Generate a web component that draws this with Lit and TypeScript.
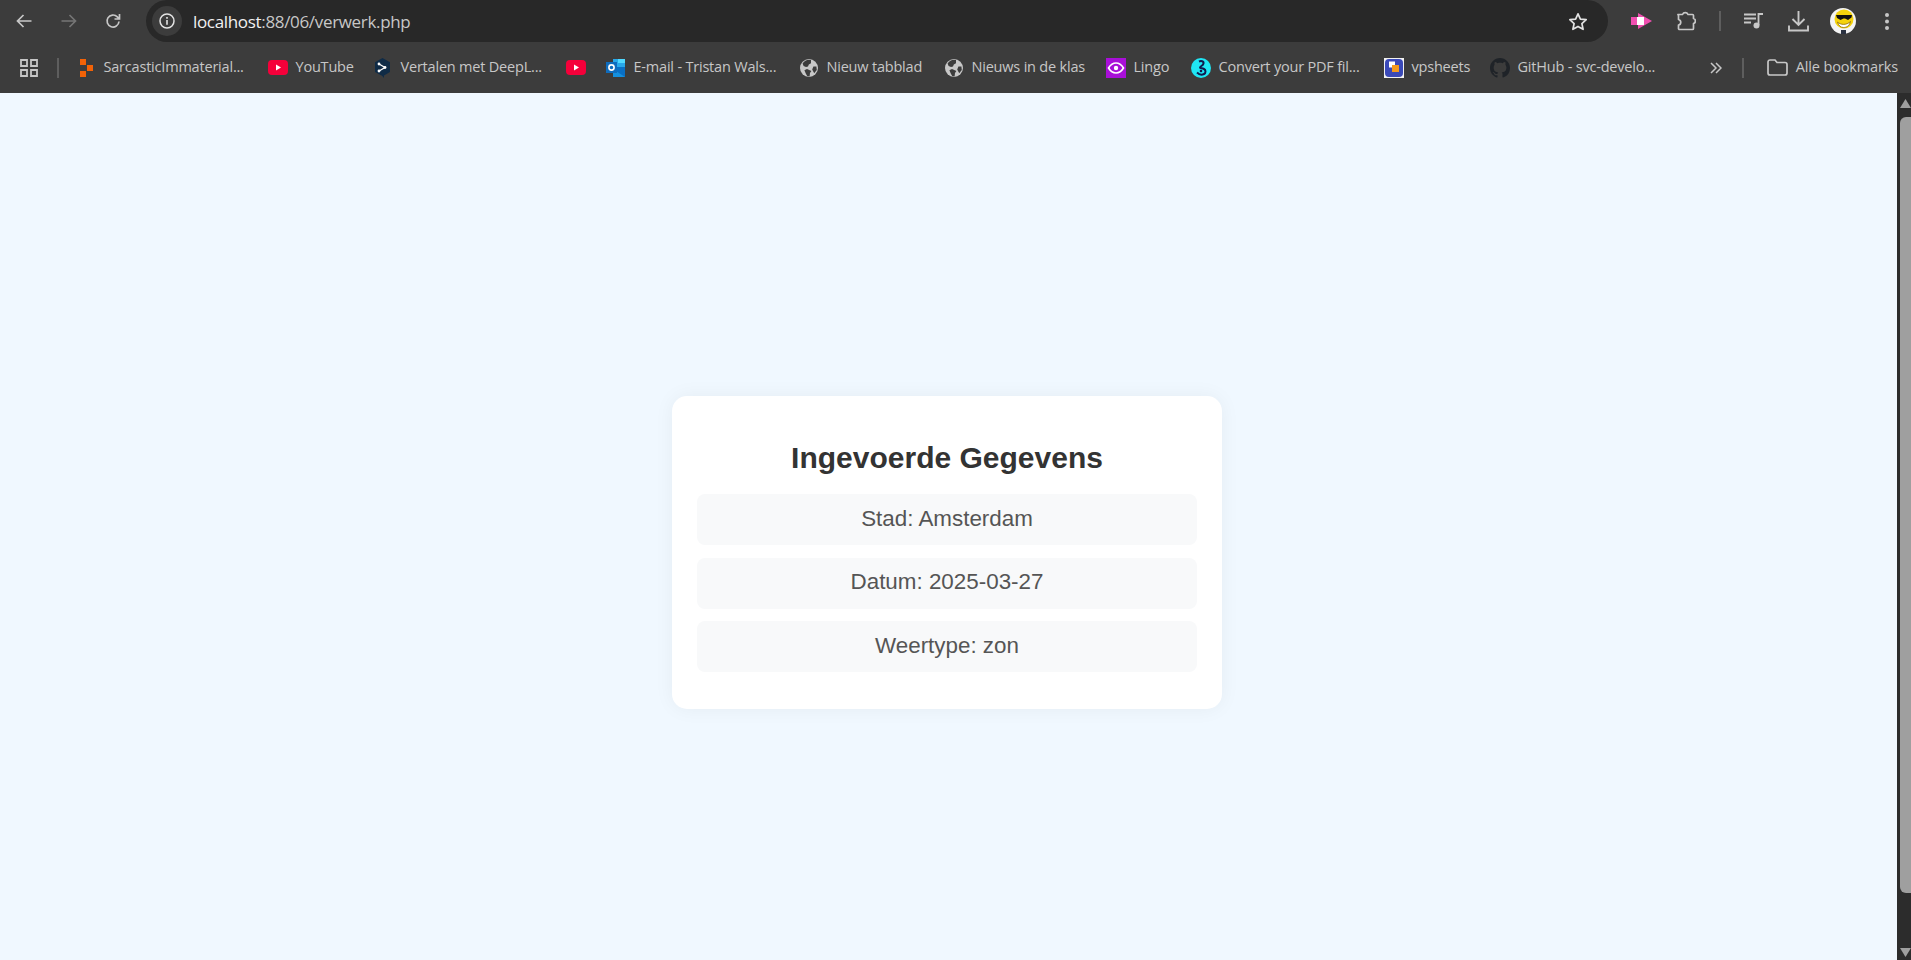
import { LitElement, html, css, TemplateResult } from 'lit';
import { customElement } from 'lit/decorators.js';

const globe = html`<svg width="18" height="18" viewBox="0 0 18 18">
  <circle cx="9" cy="9" r="9" fill="#c7c7c7" />
  <path d="M9 0.8C6.5 1 4 2.2 2.6 4.4L3.6 7 6 8l2-.4.8-2.2 2.2-1.2L11 1zM7 10l-2.6 1.2L6 15l1.4 2.3 2.2.2.4-3.6 1.4-2zM13.4 7.6l-1.2 3 2 3.6 2.6-3.2-.4-3.6z" fill="#3c3c3c" />
</svg>`;

const youtube = html`<svg width="20" height="15" viewBox="0 0 20 15">
  <rect width="20" height="15" rx="4" fill="#f5003a" />
  <path d="M8 4.5 13 7.5 8 10.5z" fill="#fff" />
</svg>`;

const marks: Record<string, TemplateResult> = {
  sarcastic: html`<svg width="14" height="18" viewBox="0 0 14 18">
    <path d="M1 0h6v6H1zM1 12h6v6H1zM8 6h6v6H8z" fill="#f26207" />
  </svg>`,
  youtube,
  deepl: html`<svg width="17" height="20" viewBox="0 0 17 20">
    <path d="M8.5 0 16 4.3v9.6L10 17.6V20l-2-2.3-7-3.8V4.3z" fill="#0f2b46" />
    <path d="M5 6 11 9.5 5 13" fill="none" stroke="#fff" stroke-width="1.3" />
    <circle cx="5" cy="6" r="1.4" fill="#fff" /><circle cx="11" cy="9.5" r="1.4" fill="#fff" /><circle cx="5" cy="13" r="1.4" fill="#fff" />
  </svg>`,
  outlook: html`<svg width="20" height="20" viewBox="0 0 20 20">
    <path d="M7 1h12v8H7z" fill="#28a8ea" /><path d="M12 1h7v4h-7z" fill="#50d9ff" />
    <path d="M7 9h12v10H7z" fill="#0a6fc4" /><path d="M7 11l12 8H7z" fill="#1490df" />
    <rect y="4" width="11" height="11" fill="#0f6cbd" />
    <circle cx="5.5" cy="9.5" r="2.6" fill="none" stroke="#fff" stroke-width="1.6" />
  </svg>`,
  globe,
  lingo: html`<svg width="20" height="20" viewBox="0 0 20 20">
    <rect width="20" height="20" fill="#a80fd8" />
    <path d="M2.5 10C5 6 7.5 5 10 5s5 1 7.5 5c-2.500 4-5 5-7.500 5s-5-1-7.500-5z" fill="none" stroke="#fff" stroke-width="1.6" />
    <circle cx="10" cy="10" r="2.200" fill="#fff" />
  </svg>`,
  convert: html`<svg width="20" height="20" viewBox="0 0 20 20">
    <circle cx="10" cy="10" r="10" fill="#1fe6f5" />
    <path d="M8 3.500C10 2.500 13 3 12.500 5.500S9 8 9 9.500c0 1 2 .5 4 1.500s2 4 0 5-5 .5-7-1.500" fill="none" stroke="#101a4f" stroke-width="2" />
    <circle cx="10" cy="13" r="1.300" fill="#101a4f" />
  </svg>`,
  vpsheets: html`<svg width="20" height="20" viewBox="0 0 20 20">
    <rect width="20" height="20" fill="#f2f2f2" />
    <rect x="1" y="1" width="18" height="18" rx="4" fill="#3a49b8" />
    <rect x="5" y="3.500" width="6" height="6" fill="#fff" />
    <rect x="8" y="7" width="7" height="7" fill="#f39a1e" />
  </svg>`,
  github: html`<svg width="20" height="20" viewBox="0 0 16 16">
    <path d="M8 0C3.58 0 0 3.58 0 8c0 3.54 2.29 6.53 5.47 7.59.4.07.55-.17.55-.38 0-.19-.01-.82-.01-1.49-2.01.37-2.53-.49-2.690-.94-.09-.23-.48-.94-.82-1.130-.28-.15-.68-.52-.01-.53.63-.01 1.080.58 1.230.82.72 1.210 1.870.87 2.330.66.07-.52.28-.87.51-1.070-1.780-.2-3.640-.89-3.640-3.950 0-.87.31-1.590.82-2.150-.08-.2-.36-1.020.08-2.120 0 0 .67-.21 2.200.82.64-.18 1.320-.27 2-.27.68 0 1.360.09 2 .27 1.530-1.040 2.200-.82 2.200-.82.44 1.100.16 1.920.08 2.120.51.56.82 1.270.82 2.150 0 3.070-1.870 3.750-3.650 3.950.29.25.54.73.54 1.480 0 1.070-.01 1.930-.01 2.200 0 .21.15.46.55.38A8.013 8.013 0 0016 8c0-4.420-3.580-8-8-8z" fill="#1f2328" />
  </svg>`,
};

// width = the slot of the label, read off the reference
const bookmarks = [
  { icon: 'sarcastic', label: 'SarcasticImmaterial...', width: 144 },
  { icon: 'youtube', label: 'YouTube', width: 57 },
  { icon: 'deepl', label: 'Vertalen met DeepL...', width: 145 },
  { icon: 'youtube', label: '', width: 0 },
  { icon: 'outlook', label: 'E-mail - Tristan Wals...', width: 145 },
  { icon: 'globe', label: 'Nieuw tabblad', width: 97 },
  { icon: 'globe', label: 'Nieuws in de klas', width: 114 },
  { icon: 'lingo', label: 'Lingo', width: 37 },
  { icon: 'convert', label: 'Convert your PDF fil...', width: 145 },
  { icon: 'vpsheets', label: 'vpsheets', width: 58 },
  { icon: 'github', label: 'GitHub - svc-develo...', width: 145 },
];

const rows = ['Stad: Amsterdam', 'Datum: 2025-03-27', 'Weertype: zon'];

@customElement('app-root')
export class AppRoot extends LitElement {
  static styles = css`
    :host {
      display: flex;
      flex-direction: column;
      height: 960px;
      overflow: hidden;
      background: #f0f8ff;
      font-family: 'Liberation Sans', Arial, sans-serif;
    }

    .toolbar {
      display: flex;
      align-items: center;
      height: 42px;
      padding-left: 2px;
      background: #3c3c3c;
    }
    .btn {
      display: flex;
      align-items: center;
      justify-content: center;
      flex: none;
      width: 44.5px;
      height: 42px;
    }
    .omnibox {
      display: flex;
      align-items: center;
      flex: none;
      box-sizing: border-box;
      width: 1462px;
      height: 42px;
      margin: 0 11.5px 0 10.5px;
      padding: 0 20px 0 6px;
      border-radius: 21px;
      background: #282828;
    }
    .info {
      display: flex;
      align-items: center;
      justify-content: center;
      width: 30px;
      height: 30px;
      margin-right: 11px;
      border-radius: 50%;
      background: #3c3c3c;
    }
    .url {
      flex: 1;
      font: 17px 'Open Sans', 'Noto Sans', sans-serif;
      letter-spacing: -0.33px;
      color: #c7c7c7;
    }
    .url b {
      font-weight: 400;
      color: #f1f1f1;
    }
    .tool-sep {
      flex: none;
      width: 2px;
      height: 20px;
      margin: 0 11px 0 10px;
      background: #5e5e5e;
    }

    .bookmarks {
      display: flex;
      align-items: center;
      height: 51px;
      padding-right: 13px;
      background: #3c3c3c;
      font: 14.5px 'Open Sans', 'Noto Sans', sans-serif;
      letter-spacing: -0.2px;
      color: #c7c7c7;
    }
    .apps {
      display: flex;
      margin-left: 20px;
    }
    .bar-sep {
      flex: none;
      width: 2px;
      height: 20px;
      margin: 0 16.5px 0 19px;
      background: #5e5e5e;
    }
    .bookmark {
      display: flex;
      align-items: center;
      flex: none;
      gap: 8px;
      margin-right: 20px;
    }
    .favicon {
      display: flex;
      align-items: center;
      justify-content: center;
      width: 20px;
      height: 20px;
    }
    .label {
      padding-bottom: 2px;
      white-space: nowrap;
    }
    .chevrons {
      display: flex;
      margin-left: 27px;
    }
    .bar-sep.end {
      margin: 0 0 0 20.5px;
    }
    .all {
      display: flex;
      align-items: center;
      gap: 8px;
      margin-left: auto;
      letter-spacing: -0.15px;
    }

    .page {
      display: flex;
      flex: 1;
      min-height: 0;
    }
    .main {
      display: flex;
      justify-content: center;
      align-items: flex-start;
      flex: 1;
      padding: 303px 3px 0 0;
    }
    .card {
      box-sizing: border-box;
      width: 550px;
      padding: 25px;
      border-radius: 15px;
      background: #fff;
      box-shadow: 0 0 20px rgba(0, 0, 0, 0.05);
      text-align: center;
    }
    h2 {
      margin: 20px 0 19px;
      font-size: 30px;
      color: #333;
    }
    .rows {
      display: flex;
      flex-direction: column;
      gap: 12.5px;
      margin-bottom: 12px;
    }
    .row {
      padding: 11.5px 12.5px 13.5px;
      border-radius: 8px;
      background: #f8f9fa;
      font-size: 22.4px;
      line-height: 26px;
      color: #555;
    }

    .scrollbar {
      display: flex;
      flex-direction: column;
      align-items: flex-end;
      flex: none;
      width: 14px;
      padding: 6px 0 3px;
      background: #2c2c2c;
    }
    .thumb {
      flex: 1;
      width: 11px;
      margin: 9px 0 55px;
      border-radius: 6px 0 0 6px;
      background: #9f9f9f;
    }
  `;

  private bookmark(b: { icon: string; label: string; width: number }) {
    return html`
      <div class="bookmark">
        <span class="favicon">${marks[b.icon]}</span>
        ${b.label
          ? html`<span class="label" style="width: ${b.width}px">${b.label}</span>`
          : ''}
      </div>
    `;
  }

  protected render() {
    return html`
      <div class="toolbar">
        <span class="btn">
          <svg width="16" height="14" viewBox="0 0 16 14"><path d="M15.500 7H1.500M7.500 1l-6 6 6 6" fill="none" stroke="#c7c7c7" stroke-width="1.700" /></svg>
        </span>
        <span class="btn">
          <svg width="16" height="14" viewBox="0 0 16 14"><path d="M.5 7h14M8.500 1l6 6-6 6" fill="none" stroke="#757575" stroke-width="1.700" /></svg>
        </span>
        <span class="btn">
          <svg width="16" height="16" viewBox="0 0 16 16"><path d="M14 8.500A6 6 0 1 1 12.300 3.800L14.300 5.800M14.500 1v5h-5" fill="none" stroke="#c7c7c7" stroke-width="1.700" /></svg>
        </span>
        <div class="omnibox">
          <span class="info">
            <svg width="16" height="16" viewBox="0 0 16 16"><circle cx="8" cy="8" r="7" fill="none" stroke="#e3e3e3" stroke-width="1.500" /><path d="M7.200 7h1.600v4.700H7.200zM7.200 4h1.600v1.700H7.200z" fill="#e3e3e3" /></svg>
          </span>
          <span class="url"><b>localhost</b>:88/06/verwerk.php</span>
          <svg width="20" height="19" viewBox="0 0 20 19"><path d="M10 1.800l2.400 5.300 5.800.6-4.300 3.900 1.200 5.700L10 14.400 4.900 17.300l1.200-5.700L1.800 7.700l5.800-.6z" fill="none" stroke="#e3e3e3" stroke-width="1.700" stroke-linejoin="round" /></svg>
        </div>
        <span class="btn">
          <svg width="21" height="16" viewBox="0 0 21 16"><path d="M7 0l14 8-14 8z" fill="#f04fb0" /><path d="M0 4h7v8H0z" fill="#f04fb0" /><path d="M6 4h7v8H6z" fill="#fff" /></svg>
        </span>
        <span class="btn">
          <svg width="20" height="20" viewBox="0 0 20 20"><path d="M2 3.500h4.500a3 3 0 0 1 5.500 0h4.500a1 1 0 0 1 1 1v3a2.600 2.600 0 0 1 0 5v5a1 1 0 0 1-1 1H3.500a1 1 0 0 1-1-1v-3.500a2.800 2.800 0 0 0 0-5.500V4.500z" fill="none" stroke="#c7c7c7" stroke-width="1.700" stroke-linejoin="round" /></svg>
        </span>
        <span class="tool-sep"></span>
        <span class="btn">
          <svg width="20" height="16" viewBox="0 0 20 16"><path d="M0 1.500h12M0 5.500h12M0 9.500h7" fill="none" stroke="#c7c7c7" stroke-width="1.800" /><path d="M14.500 12V1h4.500" fill="none" stroke="#c7c7c7" stroke-width="1.800" /><circle cx="12.500" cy="12.500" r="3" fill="#c7c7c7" /></svg>
        </span>
        <span class="btn">
          <svg width="21" height="21" viewBox="0 0 21 21"><path d="M10.500 0v13.500M4.500 8l6 6 6-6M1 14.500v5h19v-5" fill="none" stroke="#c7c7c7" stroke-width="1.900" /></svg>
        </span>
        <span class="btn">
          <svg width="26" height="26" viewBox="0 0 26 26">
            <circle cx="13" cy="13" r="13" fill="#f4f4f4" />
            <circle cx="14" cy="11" r="9.500" fill="#f4d20c" />
            <path d="M6 7h16l-.5 2.500-3.500 2.500-3-1.500-1.500 0-3 1.500-3.500-2z" fill="#111" />
            <path d="M7.500 14c3 3 9 3.500 13-.5-1 4.500-4 6-7 6s-5-2-6-5.500z" fill="#fff" stroke="#8c6a00" stroke-width=".8" />
            <path d="M11 22h5v4h-5z" fill="#2a3140" />
          </svg>
        </span>
        <span class="btn">
          <svg width="4" height="17" viewBox="0 0 4 17"><circle cx="2" cy="2" r="2" fill="#c7c7c7" /><circle cx="2" cy="8.500" r="2" fill="#c7c7c7" /><circle cx="2" cy="15" r="2" fill="#c7c7c7" /></svg>
        </span>
      </div>

      <div class="bookmarks">
        <span class="apps">
          <svg width="18" height="18" viewBox="0 0 18 18"><path d="M1 1h6v6H1zM11 1h6v6h-6zM1 11h6v6H1zM11 11h6v6h-6z" fill="none" stroke="#c7c7c7" stroke-width="1.800" /></svg>
        </span>
        <span class="bar-sep"></span>
        ${bookmarks.map((b) => this.bookmark(b))}
        <span class="chevrons">
          <svg width="12" height="12" viewBox="0 0 12 12"><path d="M1 1l5 5-5 5M6 1l5 5-5 5" fill="none" stroke="#c7c7c7" stroke-width="1.500" /></svg>
        </span>
        <span class="bar-sep end"></span>
        <span class="all">
          <svg width="21" height="17" viewBox="0 0 21 17"><path d="M1 3a2 2 0 0 1 2-2h5l2 2.500h8a2 2 0 0 1 2 2V14a2 2 0 0 1-2 2H3a2 2 0 0 1-2-2z" fill="none" stroke="#c7c7c7" stroke-width="1.700" /></svg>
          <span class="label">Alle bookmarks</span>
        </span>
      </div>

      <div class="page">
        <main class="main">
          <section class="card">
            <h2>Ingevoerde Gegevens</h2>
            <div class="rows">
              ${rows.map((r) => html`<div class="row">${r}</div>`)}
            </div>
          </section>
        </main>
        <aside class="scrollbar">
          <svg width="11" height="9" viewBox="0 0 11 9"><path d="M5.500 0 11 9H0z" fill="#9f9f9f" /></svg>
          <div class="thumb"></div>
          <svg width="11" height="9" viewBox="0 0 11 9"><path d="M0 0h11L5.500 9z" fill="#9f9f9f" /></svg>
        </aside>
      </div>
    `;
  }
}

declare global {
  interface HTMLElementTagNameMap {
    'app-root': AppRoot;
  }
}
